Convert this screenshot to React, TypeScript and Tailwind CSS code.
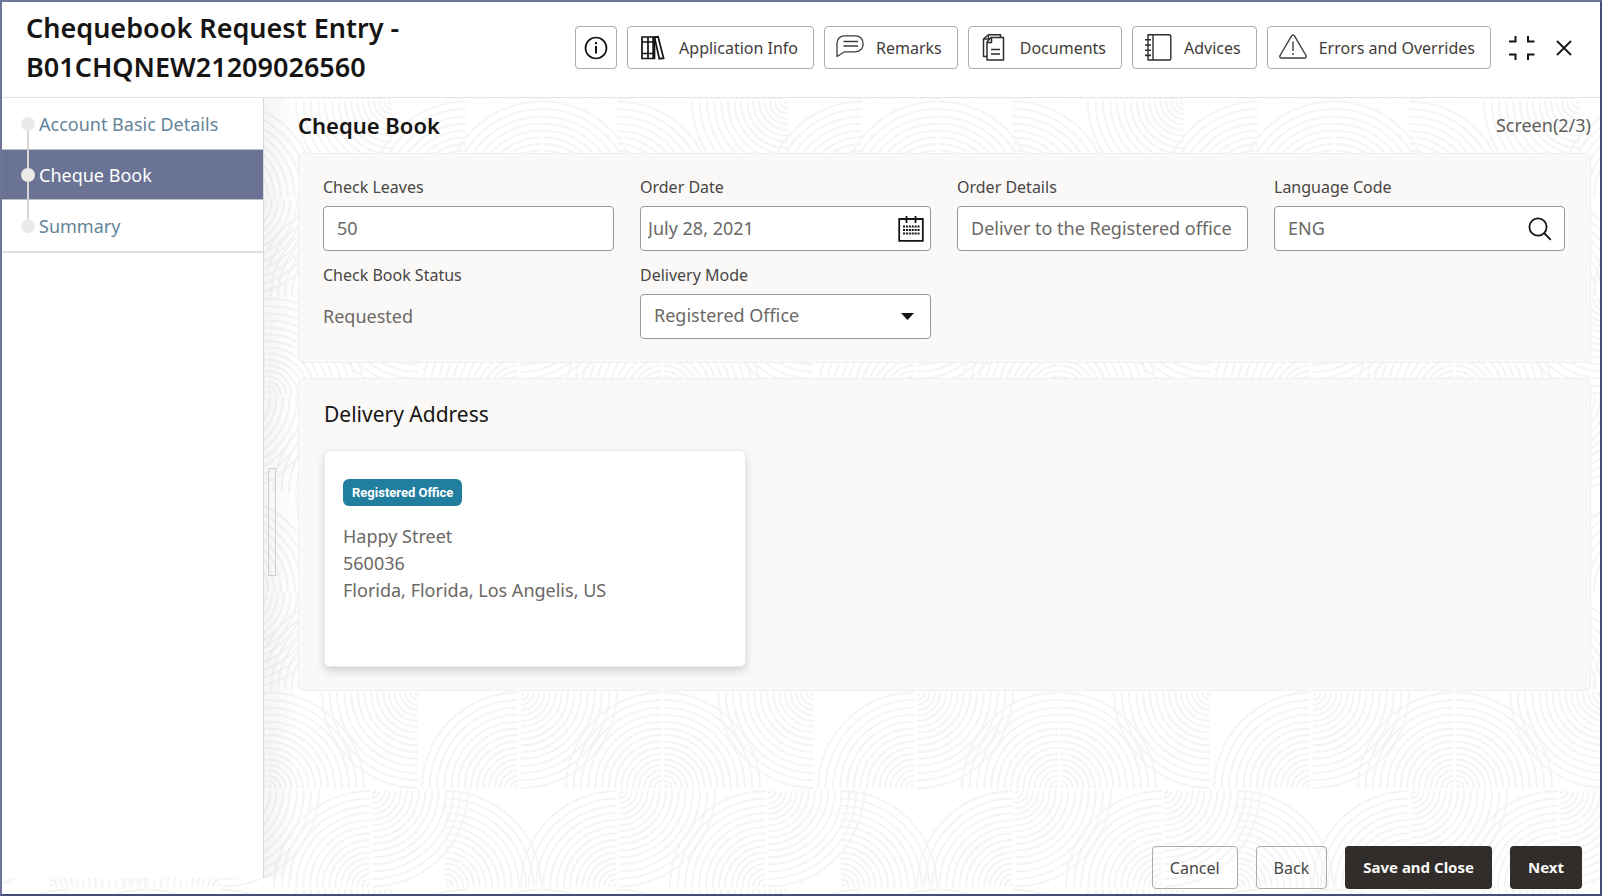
import React, { useState } from 'react';

const RADII = Array.from({ length: 16 }, (_, i) => 3 + 4.7 * i + 0.1 * i * i);
const ROW = 98.5;

type Quadrant = 'ul' | 'ur' | 'dl' | 'dr';

// quarter fans of the backdrop: [row, centre x, quadrant]
const FANS: [number, number, Quadrant][] = [
  [0, 125, 'dl'], [0, 199, 'ul'], [0, 274, 'ul'], [0, 276, 'ur'], [0, 350, 'ur'], [0, -46, 'ur'],
  [1, -30, 'dr'], [1, 85, 'ul'], [1, 87, 'ur'], [1, 235, 'ul'], [1, 237, 'dr'], [1, 366, 'dr'],
  [2, -1, 'ul'], [2, 1, 'ur'], [2, 151, 'dl'], [2, 251, 'ul'], [2, 254, 'dr'], [2, 395, 'ul'],
  [3, 103, 'ul'], [3, 105, 'dr'], [3, 178, 'ur'], [3, 350, 'ul'], [3, 352, 'dr'], [3, -44, 'dr'],
];

const fanPath = (row: number, cx: number, q: Quadrant) => {
  const top = row * ROW + 1;
  const bottom = (row + 1) * ROW - 1;
  return RADII.map((r) => {
    if (q === 'ul') return `M${cx - r},${bottom}A${r},${r} 0 0 1 ${cx},${bottom - r}`;
    if (q === 'ur') return `M${cx},${bottom - r}A${r},${r} 0 0 1 ${cx + r},${bottom}`;
    if (q === 'dl') return `M${cx - r},${top}A${r},${r} 0 0 0 ${cx},${top + r}`;
    return `M${cx + r},${top}A${r},${r} 0 0 1 ${cx},${top + r}`;
  }).join('');
};

const Backdrop = () => (
  <svg className="absolute inset-0 h-full w-full" aria-hidden="true">
    <defs>
      <pattern id="fans" x="265" y="2" width="396" height={ROW * 4} patternUnits="userSpaceOnUse">
        {FANS.map(([row, cx, q], i) => (
          <path key={i} d={fanPath(row, cx, q)} fill="none" stroke="#f4f4f4" strokeWidth="2" />
        ))}
      </pattern>
    </defs>
    <rect width="100%" height="100%" fill="url(#fans)" />
  </svg>
);

const InfoIcon = () => (
  <svg width="24" height="24" viewBox="0 0 24 24" fill="none" stroke="#161513" strokeWidth="1.7">
    <circle cx="12" cy="12" r="10.5" />
    <path d="M12 10v7.5" strokeWidth="2" />
    <path d="M12 6v2.2" strokeWidth="2" />
  </svg>
);

const BooksIcon = () => (
  <svg width="28" height="28" viewBox="0 0 28 28" fill="none" stroke="#161513" strokeWidth="1.7">
    <path d="M3 3h12.500v21.500H3zM9 3v21.500M3 8h12.500M3 19.500h12.500" />
    <path d="M15.500 3.200l3.600-.4 5.500 21.400-4.300.5z" />
    <path d="M14.500 3v21.500" strokeWidth="2.400" />
  </svg>
);

const RemarksIcon = () => (
  <svg width="28" height="28" viewBox="0 0 28 28" fill="none" stroke="#3f3c3a" strokeWidth="1.3" strokeLinejoin="round">
    <path d="M8.500 1.800h11c4.500 0 7.600 3.300 7.600 8s-3.100 8-7.600 8h-11L1 22.500V9.800c0-4.700 3-8 7.500-8z" />
    <path d="M7.500 7.500h14.500M7.500 12h14.500" />
  </svg>
);

const DocumentsIcon = () => (
  <svg width="28" height="28" viewBox="0 0 28 28" fill="none" stroke="#312d2a" strokeWidth="1.5" strokeLinejoin="round">
    <path d="M11 3.500h12.500V26H7V8z" />
    <path d="M11.500 3.500V8.500H7" />
    <path d="M20.500 3.500V.8H8.500L3.500 5v17.500H7" />
    <path d="M8.500 .8V5h-5M11 15.500h9M11 20h9" strokeWidth="1.300" />
  </svg>
);

const AdvicesIcon = () => (
  <svg width="28" height="28" viewBox="0 0 28 28" fill="none" stroke="#312d2a" strokeWidth="1.400" strokeLinejoin="round">
    <path d="M4 .8h21q1.800 0 1.800 1.800v21.600q0 1.800-1.800 1.800H4zM9 .8v25.200" />
    <path d="M1 5.800h6M1 11h6M1 16.200h6M1 21.400h6" strokeWidth="1.600" />
  </svg>
);

const WarningIcon = () => (
  <svg width="28" height="28" viewBox="0 0 28 28" fill="none" stroke="#3f3c3a" strokeWidth="1.400" strokeLinejoin="round">
    <path d="M12.400 2.200q1.600-2.400 3.200 0L27 21.500q.7 2.500-1.500 2.500h-23Q.3 24 1 21.500z" />
    <path d="M14 7.500v9.500M14 19v2" />
  </svg>
);

const CollapseIcon = () => (
  <svg width="26" height="26" viewBox="0 0 26 26" fill="none" stroke="#161513" strokeWidth="2">
    <path d="M0 6.500h6.500V1M25.500 6.500H19V1M0 19.500h6.500V25M25.500 19.500H19V25" />
  </svg>
);

const CloseIcon = () => (
  <svg width="16" height="16" viewBox="0 0 16 16" fill="none" stroke="#161513" strokeWidth="1.800">
    <path d="M1 1l14 14M15 1L1 15" />
  </svg>
);

const CalendarIcon = () => (
  <svg width="26" height="26" viewBox="0 0 26 26" fill="none" stroke="#161513">
    <path d="M1.200 3h23.600v21.800H1.200z" strokeWidth="1.800" />
    <path d="M8.500 0v7M17.500 0v7" strokeWidth="1.800" />
    <path d="M5 10.500h16.500M5 14h16.500M5 17.500h16.500" strokeWidth="2" strokeDasharray="2 0.900" />
  </svg>
);

const SearchIcon = () => (
  <svg width="24" height="24" viewBox="0 0 24 24" fill="none" stroke="#161513" strokeWidth="1.800">
    <circle cx="10" cy="10" r="8.600" />
    <path d="M16 16l6.800 6.800" />
  </svg>
);

const actions = [
  { label: 'Application Info', Icon: BooksIcon },
  { label: 'Remarks', Icon: RemarksIcon },
  { label: 'Documents', Icon: DocumentsIcon },
  { label: 'Advices', Icon: AdvicesIcon },
  { label: 'Errors and Overrides', Icon: WarningIcon },
];

const steps = ['Account Basic Details', 'Cheque Book', 'Summary'];

const labelClass = 'mb-[7px] block text-[16px] leading-6 text-[#494644]';
const boxClass = 'flex h-[45px] items-center rounded border border-[#9a9897] bg-white';
const fieldClass = 'h-full w-full min-w-0 flex-1 bg-transparent pb-0.5 text-[18px] text-[#6b6866] outline-none';

const App = () => {
  const [leaves, setLeaves] = useState('50');
  const [date, setDate] = useState('July 28, 2021');
  const [details, setDetails] = useState('Deliver to the Registered office');
  const [language, setLanguage] = useState('ENG');
  const [mode, setMode] = useState('Registered Office');

  return (
    <div className="flex min-h-screen flex-col border-2 border-t-[#6e7599] border-r-[#454d78] border-b-[#454d78] border-l-[#6e7599] bg-white font-['Noto_Sans','Open_Sans',sans-serif] text-[#161513]">
      {/* Header */}
      <header className="flex items-start justify-between border-b border-[#e4e4e4] pt-1.5 pr-7 pb-[11px] pl-6">
        <h1 className="w-[400px] text-[27px] leading-[39px] font-semibold">
          Chequebook Request Entry - B01CHQNEW21209026560
        </h1>
        <div className="mt-[18px] flex items-center gap-[10px]">
          <button aria-label="Information" className="flex h-[43px] w-[42px] items-center justify-center rounded border border-[#aeacab]">
            <InfoIcon />
          </button>
          {actions.map(({ label, Icon }) => (
            <button
              key={label}
              className="flex h-[43px] items-center gap-3 rounded border border-[#aeacab] pr-[15px] pl-[11px] text-[16px] whitespace-nowrap text-[#3f3c3a]"
            >
              <Icon />
              {label}
            </button>
          ))}
          <button aria-label="Collapse" className="ml-2">
            <CollapseIcon />
          </button>
          <button aria-label="Close" className="ml-[11px]">
            <CloseIcon />
          </button>
        </div>
      </header>

      {/* Body */}
      <div className="relative flex flex-1">
        <Backdrop />
        <aside className="relative mb-4 w-[262px] shrink-0 border-r border-[#d5d6dc] bg-white">
          <nav>
            <ul>
              {steps.map((step, i) => {
                const active = i === 1;
                return (
                  <li
                    key={step}
                    className={
                      active
                        ? 'flex h-[51px] items-stretch border-y border-[#bfc0c8] bg-[#6b7394] pl-[19px]'
                        : 'flex h-[51px] items-stretch pl-[19px] last:h-[53px] last:border-b-2 last:border-[#e0e0e0]'
                    }
                  >
                    <span className="flex w-[14px] flex-col items-center">
                      <span className={i === 0 ? 'w-0.5 flex-1' : 'w-0.5 flex-1 bg-[#d8d7d6]'} />
                      <span className="h-[14px] w-[14px] rounded-full bg-[#ebeae9]" />
                      <span className={i === 2 ? 'w-0.5 flex-1' : 'w-0.5 flex-1 bg-[#d8d7d6]'} />
                    </span>
                    <a
                      href="#"
                      className={
                        active
                          ? 'self-center pl-1 text-[18px] leading-6 text-white'
                          : 'self-center pl-1 text-[18px] leading-6 text-[#64849a]'
                      }
                    >
                      {step}
                    </a>
                  </li>
                );
              })}
            </ul>
          </nav>
        </aside>
        <div className="relative mb-4 w-[34px] shrink-0 bg-linear-to-r from-black/4 to-transparent">
          <div className="mt-[370px] ml-1 h-[108px] w-2 border border-[#cfcfcf]" />
        </div>

        <main className="relative flex min-w-0 flex-1 flex-col pr-[9px]">
          <div className="flex h-[55px] items-center justify-between">
            <h2 className="text-[22px] font-semibold">Cheque Book</h2>
            <span className="text-[18px] text-[#5f5c5a]">Screen(2/3)</span>
          </div>

          <section className="grid grid-cols-4 gap-x-[26px] gap-y-3 rounded-md border border-[#f1efed] bg-[#faf9f8] pt-[21px] pr-[25px] pb-[23px] pl-6">
            <div>
              <label htmlFor="leaves" className={labelClass}>Check Leaves</label>
              <div className={boxClass}>
                <input id="leaves" className={`${fieldClass} px-[13px]`} value={leaves} onChange={(e) => setLeaves(e.target.value)} />
              </div>
            </div>
            <div>
              <label htmlFor="date" className={labelClass}>Order Date</label>
              <div className={boxClass}>
                <input id="date" className={`${fieldClass} pl-[7px]`} value={date} onChange={(e) => setDate(e.target.value)} />
                <button aria-label="Pick a date" className="mr-1.5"><CalendarIcon /></button>
              </div>
            </div>
            <div>
              <label htmlFor="details" className={labelClass}>Order Details</label>
              <div className={boxClass}>
                <input id="details" className={`${fieldClass} px-[13px]`} value={details} onChange={(e) => setDetails(e.target.value)} />
              </div>
            </div>
            <div>
              <label htmlFor="language" className={labelClass}>Language Code</label>
              <div className={boxClass}>
                <input id="language" className={`${fieldClass} pl-[13px]`} value={language} onChange={(e) => setLanguage(e.target.value)} />
                <button aria-label="Search language" className="mr-3"><SearchIcon /></button>
              </div>
            </div>
            <div>
              <span className={labelClass}>Check Book Status</span>
              <p className="text-[18px] leading-[45px] text-[#6b6866]">Requested</p>
            </div>
            <div>
              <label htmlFor="mode" className={labelClass}>Delivery Mode</label>
              <div className={`${boxClass} relative`}>
                <select id="mode" className={`${fieldClass} appearance-none px-[13px]`} value={mode} onChange={(e) => setMode(e.target.value)}>
                  <option>Registered Office</option>
                  <option>Branch</option>
                </select>
                <svg className="pointer-events-none absolute right-4" width="13" height="7" viewBox="0 0 13 7">
                  <path d="M0 0h13L6.500 7z" fill="#161513" />
                </svg>
              </div>
            </div>
          </section>

          <section className="mt-[15px] rounded-md border border-[#f1efed] bg-[#faf9f8] px-[25px] pt-[19px] pb-[23px]">
            <h3 className="text-[21px] leading-8">Delivery Address</h3>
            <div className="mt-5 min-h-[217px] w-[422px] rounded-md border border-[#ebeae9] bg-white px-[18px] pt-7 shadow-[0_4px_8px_rgba(0,0,0,0.16)]">
              <span className="inline-block rounded-md bg-[#227e9e] px-[9px] font-['Roboto','Noto_Sans',sans-serif] text-[13px] leading-[27px] font-bold text-white">
                Registered Office
              </span>
              <address className="mt-[17px] text-[18px] leading-[27px] text-[#6b6866] not-italic">
                Happy Street
                <br />
                560036
                <br />
                Florida, Florida, Los Angelis, US
              </address>
            </div>
          </section>

          {/* Footer actions */}
          <footer className="mt-auto flex justify-end gap-[18px] pr-[9px] pb-[5px] text-[15px]">
            <button className="h-[43px] rounded border border-[#aeacab] px-[17px] text-[16px] text-[#494644]">Cancel</button>
            <button className="h-[43px] rounded border border-[#aeacab] px-[17px] text-[16px] text-[#494644]">Back</button>
            <button className="h-[43px] rounded bg-[#312d2a] px-[18px] font-bold text-[#faf9f8]">Save and Close</button>
            <button className="h-[43px] rounded bg-[#312d2a] px-[18px] font-bold text-[#faf9f8]">Next</button>
          </footer>
        </main>
      </div>
    </div>
  );
};

export default App;
